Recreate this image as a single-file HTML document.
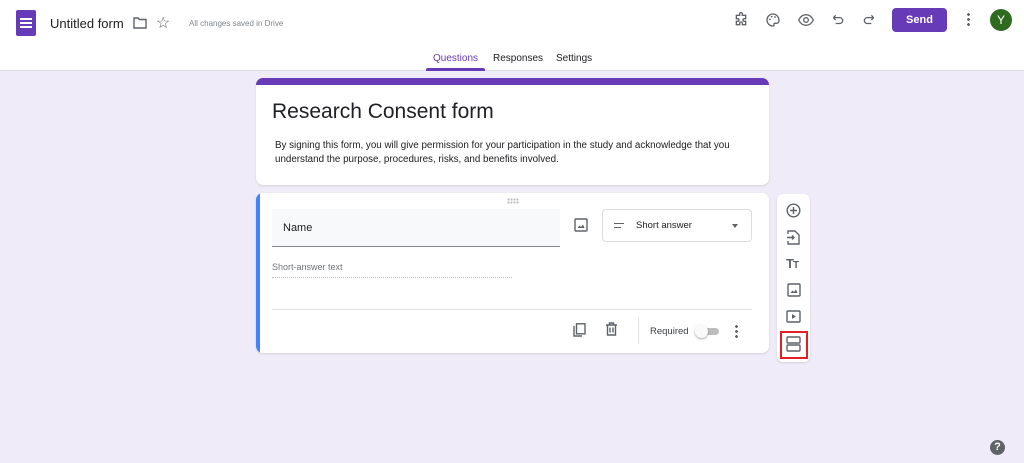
<!DOCTYPE html>
<html><head><style>
*{box-sizing:border-box;margin:0;padding:0}
body{width:1024px;height:463px;background:#f0ebf8;font-family:"Liberation Sans",Arial,sans-serif;position:relative;overflow:hidden;color:#202124}
.a{position:absolute}
svg{display:block}
</style></head><body>
<div class="a" style="left:0;top:0;width:1024px;height:71px;background:#fff;border-bottom:1px solid #e0dcea"></div>
<div class="a" style="left:16px;top:10px;width:20px;height:26px;background:#673ab7;border-radius:2px"></div>
<div class="a" style="left:20px;top:18px;width:12px;border-top:2px solid #fff"></div>
<div class="a" style="left:20px;top:22px;width:12px;border-top:2px solid #fff"></div>
<div class="a" style="left:20px;top:26px;width:12px;border-top:2px solid #fff"></div>
<div class="a" style="left:50px;top:16px;font-size:13px;color:#202124">Untitled form</div>
<svg class="a" style="left:133px;top:17px" width="14" height="12" viewBox="0 0 14 12"><path d="M1 1h4l1.5 1.5H13v8.5H1z" fill="none" stroke="#5f6368" stroke-width="1.4"/></svg>
<div class="a" style="left:156px;top:13px;font-size:16px;color:#5f6368">☆</div>
<div class="a" style="left:189px;top:19px;font-size:8px;color:#80868b">All changes saved in Drive</div>
<svg class="a" style="left:733px;top:12px" width="16" height="16" viewBox="0 0 24 24"><path d="M10 3a2 2 0 014 0v2h5v5h-2a2 2 0 000 4h2v5h-5v-2a2 2 0 00-4 0v2H5v-5h2a2 2 0 000-4H5V5h5z" fill="none" stroke="#5f6368" stroke-width="2"/></svg>
<svg class="a" style="left:765px;top:12px" width="16" height="16" viewBox="0 0 24 24"><path d="M12 3a9 9 0 000 18c1.5 0 2-1 1.5-2s0-2 1.5-2h2a4 4 0 004-4c0-5.5-4-10-9-10z" fill="none" stroke="#5f6368" stroke-width="2"/><circle cx="7.5" cy="11" r="1.3" fill="#5f6368"/><circle cx="10" cy="7" r="1.3" fill="#5f6368"/><circle cx="15" cy="7.5" r="1.3" fill="#5f6368"/></svg>
<svg class="a" style="left:797px;top:12px" width="18" height="16" viewBox="0 0 24 24"><path d="M1 12c3-6 7-8 11-8s8 2 11 8c-3 6-7 8-11 8s-8-2-11-8z" fill="none" stroke="#5f6368" stroke-width="2"/><circle cx="12" cy="12" r="3.5" fill="none" stroke="#5f6368" stroke-width="2"/></svg>
<svg class="a" style="left:831px;top:12px" width="14" height="16" viewBox="0 0 24 24"><path d="M4 8h11a5 5 0 010 10H8M4 8l4-4M4 8l4 4" fill="none" stroke="#5f6368" stroke-width="2.2"/></svg>
<svg class="a" style="left:862px;top:12px" width="14" height="16" viewBox="0 0 24 24"><path d="M20 8H9a5 5 0 000 10h7M20 8l-4-4M20 8l-4 4" fill="none" stroke="#5f6368" stroke-width="2.2"/></svg>
<div class="a" style="left:892px;top:8px;width:55px;height:24px;background:#673ab7;border-radius:4px;color:#fff;font-size:11px;font-weight:bold;text-align:center;line-height:24px">Send</div>
<div class="a" style="left:967px;top:12px;width:3px;height:14px;background:radial-gradient(circle,#5f6368 1.3px,transparent 1.5px) 0 0/3px 5px"></div>
<div class="a" style="left:990px;top:9px;width:22px;height:22px;border-radius:50%;background:#2e6b1f;color:#fff;font-size:12px;text-align:center;line-height:22px">Y</div>
<div class="a" style="left:433px;top:53px;font-size:10px;color:#673ab7">Questions</div>
<div class="a" style="left:426px;top:68px;width:59px;height:3px;background:#673ab7;border-radius:2px 2px 0 0"></div>
<div class="a" style="left:493px;top:53px;font-size:10px;color:#202124">Responses</div>
<div class="a" style="left:556px;top:53px;font-size:10px;color:#202124">Settings</div>

<div class="a" style="left:256px;top:78px;width:513px;height:107px;background:#fff;border-radius:7px;overflow:hidden;box-shadow:0 1px 2px rgba(0,0,0,.12)"><div style="height:7px;background:#673ab7"></div></div>
<div class="a" style="left:272px;top:100px;font-size:21px;color:#202124">Research Consent form</div>
<div class="a" style="left:275px;top:139px;width:480px;font-size:9.8px;line-height:14px;color:#202124">By signing this form, you will give permission for your participation in the study and acknowledge that you understand the purpose, procedures, risks, and benefits involved.</div>

<div class="a" style="left:256px;top:193px;width:513px;height:160px;background:#fff;border-radius:7px;overflow:hidden;box-shadow:0 1px 2px rgba(0,0,0,.12)"><div style="width:4px;height:100%;background:#4285f4"></div></div>
<div class="a" style="left:507px;top:198px;width:12px;height:6px;background:radial-gradient(circle,#bdbdbd 1px,transparent 1.2px) 0 0/3px 3px"></div>
<div class="a" style="left:272px;top:209px;width:288px;height:38px;background:#f8f9fa;border-bottom:1px solid #80868b"></div>
<div class="a" style="left:283px;top:222px;font-size:11px">Name</div>
<svg class="a" style="left:574px;top:218px" width="14" height="14" viewBox="0 0 14 14"><rect x="1" y="1" width="12" height="12" rx="1" fill="none" stroke="#5f6368" stroke-width="1.4"/><path d="M3.5 10l2-2.5 1.5 1.5 2-2.5 1.5 3.5z" fill="#5f6368"/></svg>
<div class="a" style="left:602px;top:209px;width:150px;height:33px;border:1px solid #dadce0;border-radius:4px"></div>
<div class="a" style="left:614px;top:223px;width:10px;border-top:1.5px solid #5f6368"></div>
<div class="a" style="left:614px;top:227px;width:7px;border-top:1.5px solid #5f6368"></div>
<div class="a" style="left:636px;top:220px;font-size:9.5px">Short answer</div>
<div class="a" style="left:732px;top:224px;border-left:3.5px solid transparent;border-right:3.5px solid transparent;border-top:4px solid #5f6368"></div>
<div class="a" style="left:272px;top:262px;font-size:9px;color:#70757a">Short-answer text</div>
<div class="a" style="left:272px;top:277px;width:240px;border-top:1px dotted #bdc1c6"></div>
<div class="a" style="left:272px;top:309px;width:480px;border-top:1px solid #e0e0e0"></div>
<svg class="a" style="left:573px;top:323px" width="13" height="14" viewBox="0 0 13 14"><rect x="3.5" y="0.8" width="8.5" height="10" fill="none" stroke="#5f6368" stroke-width="1.4"/><path d="M1 3v10h8" fill="none" stroke="#5f6368" stroke-width="1.4"/></svg>
<svg class="a" style="left:605px;top:322px" width="13" height="14" viewBox="0 0 13 14"><path d="M1 3h11M4.5 3V1h4v2M2.5 3v10h8V3M5 5.5v5M8 5.5v5" fill="none" stroke="#5f6368" stroke-width="1.4"/></svg>
<div class="a" style="left:638px;top:318px;height:26px;border-left:1px solid #e0e0e0"></div>
<div class="a" style="left:650px;top:326px;font-size:9.5px;color:#3c4043">Required</div>
<div class="a" style="left:699px;top:328px;width:20px;height:7px;border-radius:4px;background:#bdbdbd"></div>
<div class="a" style="left:695px;top:325px;width:13px;height:13px;border-radius:50%;background:#fafafa;box-shadow:0 1px 2px rgba(0,0,0,.35)"></div>
<div class="a" style="left:735px;top:324px;width:3px;height:14px;background:radial-gradient(circle,#5f6368 1.3px,transparent 1.5px) 0 0/3px 5px"></div>

<div class="a" style="left:777px;top:194px;width:33px;height:168px;background:#fff;border-radius:6px;box-shadow:0 1px 2px rgba(0,0,0,.12)"></div>
<svg class="a" style="left:786px;top:203px" width="15" height="15" viewBox="0 0 15 15"><circle cx="7.5" cy="7.5" r="6.3" fill="none" stroke="#5f6368" stroke-width="1.4"/><path d="M7.5 4v7M4 7.5h7" stroke="#5f6368" stroke-width="1.4"/></svg>
<svg class="a" style="left:787px;top:230px" width="13" height="15" viewBox="0 0 13 15"><path d="M1 4V1h7l4 4v9H1v-3" fill="none" stroke="#5f6368" stroke-width="1.4"/><path d="M0 7.5h7M5 5.5l2 2-2 2" fill="none" stroke="#5f6368" stroke-width="1.4"/></svg>
<div class="a" style="left:786px;top:256px;font-size:13px;font-weight:bold;color:#5f6368;letter-spacing:-1px">T<span style="font-size:10px">T</span></div>
<svg class="a" style="left:787px;top:283px" width="14" height="14" viewBox="0 0 14 14"><rect x="1" y="1" width="12" height="12" rx="1" fill="none" stroke="#5f6368" stroke-width="1.4"/><path d="M3.5 10l2-2.5 1.5 1.5 2-2.5 1.5 3.5z" fill="#5f6368"/></svg>
<svg class="a" style="left:786px;top:310px" width="15" height="13" viewBox="0 0 15 13"><rect x="1" y="1" width="13" height="11" rx="1" fill="none" stroke="#5f6368" stroke-width="1.4"/><path d="M6 4v5l4-2.5z" fill="#5f6368"/></svg>
<div class="a" style="left:780px;top:331px;width:28px;height:28px;border:2px solid #e31e24"></div>
<svg class="a" style="left:786px;top:336px" width="15" height="16" viewBox="0 0 15 16"><rect x="1" y="1" width="13" height="6" rx="1" fill="none" stroke="#5f6368" stroke-width="1.4"/><rect x="1" y="9" width="13" height="6" rx="1" fill="none" stroke="#5f6368" stroke-width="1.4"/></svg>
<div class="a" style="left:990px;top:440px;width:15px;height:15px;border-radius:50%;background:#5f6368;color:#fff;font-size:11px;font-weight:bold;text-align:center;line-height:15px">?</div>
</body></html>
